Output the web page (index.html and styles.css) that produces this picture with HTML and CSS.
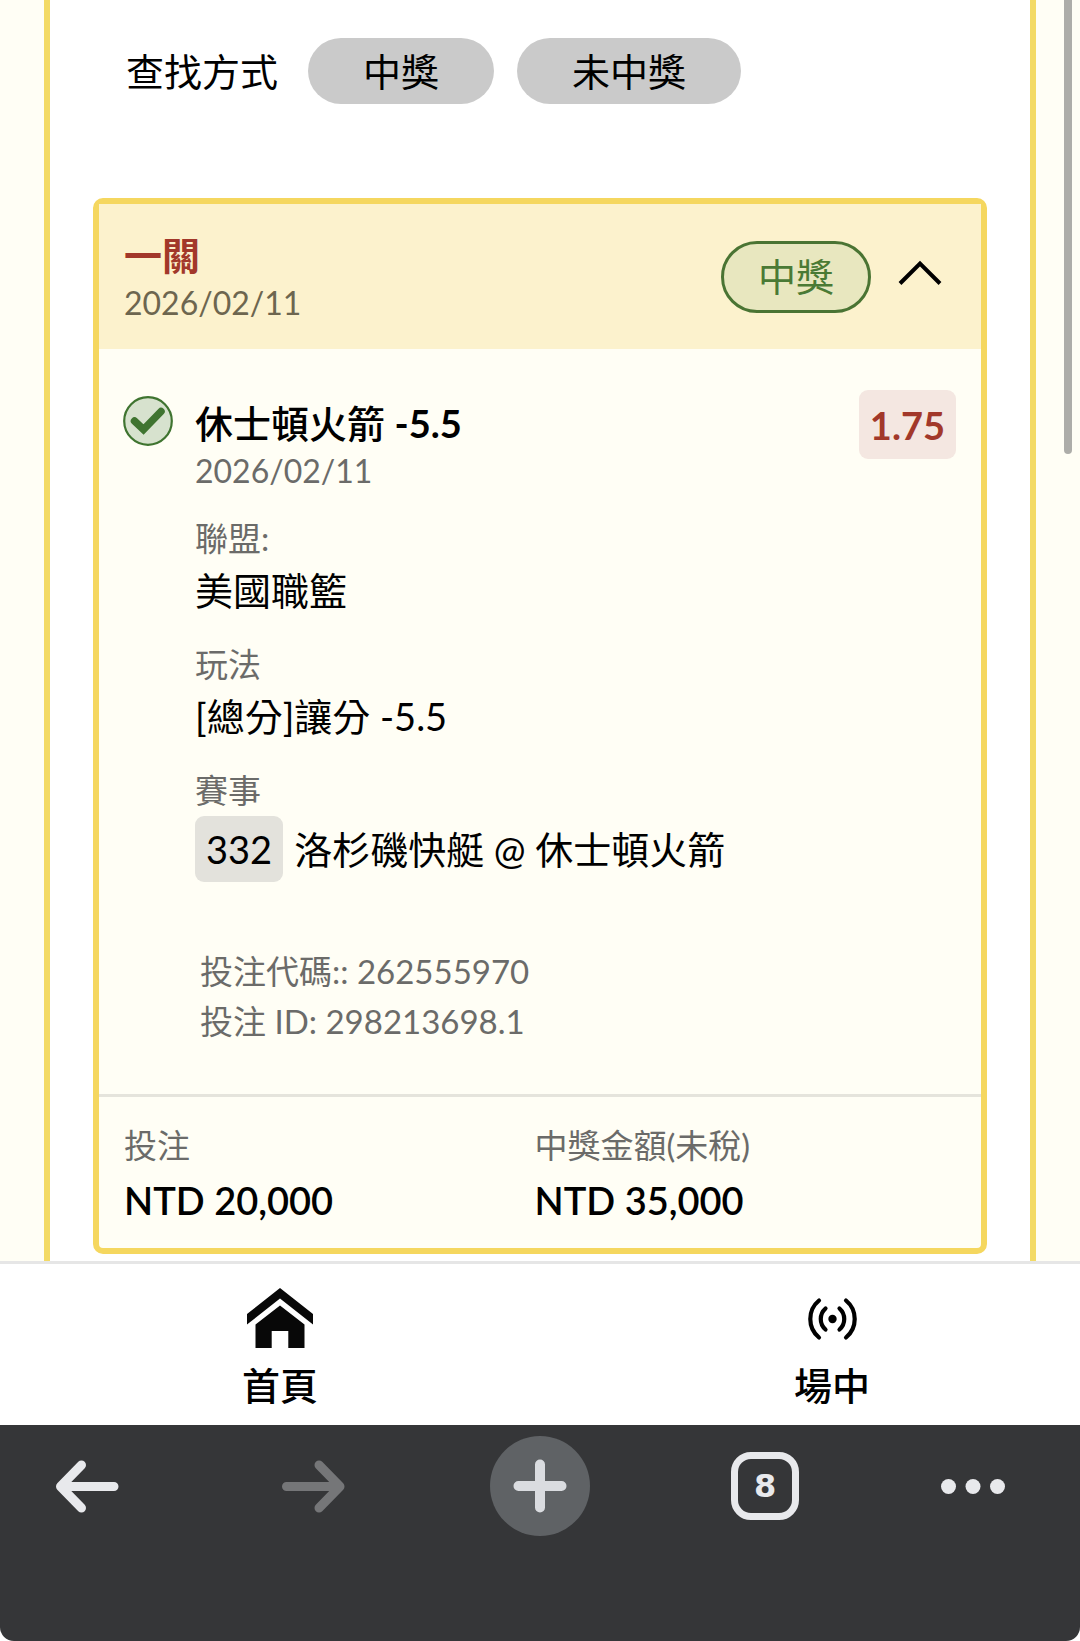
FILE: index.html
```html
<!DOCTYPE html>
<html lang="zh-Hant">
<head>
<meta charset="utf-8">
<meta name="viewport" content="width=device-width, initial-scale=1">
<title>投注紀錄</title>
<link rel="stylesheet" href="styles.css">
</head>
<body>
<div class="page">
  <div class="scrollbar" aria-hidden="true"></div>
  <main class="content">
    <section class="panel">
      <div class="filters" role="group" aria-labelledby="filter-label">
        <span class="filter-label" id="filter-label">查找方式</span>
        <button class="filter" type="button">中獎</button>
        <button class="filter" type="button">未中獎</button>
      </div>

      <article class="ticket">
        <header class="ticket-head">
          <div class="ticket-heading">
            <h2 class="ticket-title">一關</h2>
            <time class="muted date" datetime="2026-02-11">2026/02/11</time>
          </div>
          <span class="status">中獎</span>
          <button class="toggle" type="button" aria-label="收合" aria-expanded="true">
            <svg class="chevron" viewBox="0 0 44 26" aria-hidden="true"><path d="M2 23.500 22 3.500 42 23.500" fill="none" stroke="#000" stroke-width="4"/></svg>
          </button>
        </header>

        <div class="bet">
          <svg class="check" viewBox="0 0 50 50" aria-hidden="true">
            <circle cx="25" cy="25" r="23.800" fill="#d7e2ce" stroke="#3f7430" stroke-width="2.200"/>
            <path d="M11.500 25 20.500 33.500 38 15.500" fill="none" stroke="#3f7430" stroke-width="7.500" stroke-linecap="round"/>
          </svg>
          <div class="bet-body">
            <h3 class="bet-title">休士頓火箭 <span class="handicap">-5.5</span></h3>
            <time class="muted date" datetime="2026-02-11">2026/02/11</time>
            <dl class="details">
              <div class="detail">
                <dt class="muted">聯盟:</dt>
                <dd class="value">美國職籃</dd>
              </div>
              <div class="detail">
                <dt class="muted">玩法</dt>
                <dd class="value">[總分]讓分 -5.5</dd>
              </div>
              <div class="detail">
                <dt class="muted">賽事</dt>
                <dd class="value match"><span class="code">332</span><span>洛杉磯快艇 @ 休士頓火箭</span></dd>
              </div>
            </dl>
            <div class="ids">
              <p class="muted">投注代碼:: 262555970</p>
              <p class="muted">投注 ID: 298213698.1</p>
            </div>
          </div>
          <span class="odds">1.75</span>
        </div>

        <dl class="totals">
          <div>
            <dt class="muted">投注</dt>
            <dd class="amount">NTD 20,000</dd>
          </div>
          <div>
            <dt class="muted">中獎金額(未稅)</dt>
            <dd class="amount">NTD 35,000</dd>
          </div>
        </dl>
      </article>
    </section>
  </main>

  <nav class="tabs">
    <a class="tab" href="#home">
      <svg class="tab-icon" viewBox="0 0 72 72" aria-hidden="true">
        <path d="M36 5 69 31v10.500L36 15.500 3 41.500V31z" fill="#080808"/>
        <path d="M36 22.500 60.500 41.500V65H44.300V48H27.700V65H11.500V41.500z" fill="#080808"/>
      </svg>
      <span>首頁</span>
    </a>
    <a class="tab" href="#live">
      <svg class="tab-icon" viewBox="0 0 72 72" fill="none" stroke="#000" stroke-width="4.200" stroke-linecap="round" aria-hidden="true">
        <circle cx="36.500" cy="36" r="4.200" fill="#000" stroke="none"/>
        <path d="M29.500 25.500a14 14 0 0 0 0 21M43.500 25.500a14 14 0 0 1 0 21M23 17.500a24 24 0 0 0 0 37M50 17.500a24 24 0 0 1 0 37"/>
      </svg>
      <span>場中</span>
    </a>
  </nav>

  <footer class="browser">
    <button class="tool" type="button" aria-label="上一頁">
      <svg class="tool-icon" viewBox="0 0 100 100" aria-hidden="true"><path d="M43.500 29 22.500 50.500 43.500 72M24 50.500H76" fill="none" stroke="#e8e9ec" stroke-width="9" stroke-linecap="round" stroke-linejoin="round"/></svg>
    </button>
    <button class="tool" type="button" aria-label="下一頁" disabled>
      <svg class="tool-icon" viewBox="0 0 100 100" aria-hidden="true"><path d="M55 29 76 50.500 55 72M74.500 50.500H22.500" fill="none" stroke="#757678" stroke-width="9" stroke-linecap="round" stroke-linejoin="round"/></svg>
    </button>
    <button class="tool tool-new" type="button" aria-label="新分頁">
      <svg class="tool-icon" viewBox="0 0 100 100" aria-hidden="true"><path d="M50 28.500V71.500M28.500 50H71.500" fill="none" stroke="#dadce0" stroke-width="10" stroke-linecap="round"/></svg>
    </button>
    <button class="tool" type="button" aria-label="8 個分頁"><span class="tab-count">8</span></button>
    <button class="tool tool-menu" type="button" aria-label="選單">
      <svg class="menu-icon" viewBox="0 0 64 100" fill="#e8e9ec" aria-hidden="true"><circle cx="7.500" cy="50.500" r="7.500"/><circle cx="32" cy="50.500" r="7.500"/><circle cx="56.500" cy="50.500" r="7.500"/></svg>
    </button>
  </footer>
</div>
</body>
</html>
```
FILE: styles.css
```css
* {
  box-sizing: border-box;
}

body,
h2,
h3,
p,
dl,
dd {
  margin: 0;
}

body {
  background: #fff;
  color: #000;
  font-family: Lato, "Noto Sans CJK TC", sans-serif;
  font-size: 38px;
  line-height: 48px;
}

button {
  margin: 0;
  padding: 0;
  border: 0;
  background: none;
  color: inherit;
  font: inherit;
}

svg {
  display: block;
}

.page {
  position: relative;
  display: flex;
  flex-direction: column;
  min-height: 100vh;
  overflow: hidden;
}

.scrollbar {
  position: absolute;
  top: -8px;
  right: 8px;
  width: 8px;
  height: 462px;
  border-radius: 4px;
  background: #adada9;
}

.content {
  padding: 0 44px;
  background: #fffef5;
}

.panel {
  padding: 38px 43px 7px;
  border: solid #f3da65;
  border-width: 0 6px;
  background: #fff;
}

.filters {
  display: flex;
  align-items: center;
  gap: 23px;
  margin-bottom: 94px;
  padding-left: 33px;
}

.filter-label {
  margin-right: 7px;
}

.filter {
  height: 66px;
  padding: 0 55px;
  border-radius: 33px;
  background: #cacaca;
}

.ticket {
  border: 6px solid #f5d75f;
  border-radius: 10px;
  background: #fffef5;
}

.ticket-head {
  display: flex;
  align-items: center;
  padding: 27px 39px 22px 25px;
  background: #fcf2cd;
}

.ticket-heading {
  flex: 1;
}

.ticket-title {
  color: #a2382a;
  font-size: 38px;
  font-weight: 700;
}

.muted {
  display: block;
  color: #6b6b69;
  font-size: 33px;
}

.date {
  font-size: 32px;
}

.ticket-head .muted {
  color: #6d664f;
}

.status {
  margin-bottom: 4px;
  padding: 8px 34px 10px;
  border: 3px solid #4a7433;
  border-radius: 36px;
  background: #e8e7bf;
  color: #4a7a35;
}

.toggle {
  margin-left: 27px;
  padding-bottom: 12px;
}

.chevron {
  width: 44px;
  height: 26px;
}

.bet {
  display: flex;
  align-items: flex-start;
  padding: 41px 25px 48px 24px;
}

.check {
  flex: none;
  width: 50px;
  height: 50px;
  margin: 6px 22px 0 0;
}

.bet-body {
  flex: 1;
  padding-top: 9px;
}

.bet-title {
  font-size: 38px;
  font-weight: 500;
}

.handicap {
  font-weight: 700;
}

.odds {
  padding: 11px 11px 10px;
  border-radius: 9px;
  background: #f4e7e1;
  color: #a2382a;
  font-weight: 700;
}

.details {
  display: grid;
  gap: 22px;
  margin-top: 19px;
}

.value {
  line-height: 56px;
}

.match {
  display: flex;
  align-items: center;
  gap: 11px;
  padding-top: 2px;
  line-height: 66px;
}

.code {
  padding: 0 11px;
  border-radius: 9px;
  background: #e3e2dc;
}

.ids {
  margin-top: 64px;
  padding-left: 5px;
  line-height: 50px;
}

.totals {
  display: grid;
  grid-template-columns: 1fr 1fr;
  padding: 24px 36px 17px 25px;
  border-top: 3px solid #e5e4dc;
}

.amount {
  font-weight: 600;
  line-height: 62px;
}

.tabs {
  display: flex;
  padding: 19px 0 14px 4px;
  border-top: 3px solid #e6e6e6;
  background: #fff;
}

.tab {
  display: flex;
  flex: none;
  flex-direction: column;
  align-items: center;
  gap: 4px;
  width: calc(50% + 14px);
  color: #000;
  font-weight: 500;
  line-height: 52px;
  text-decoration: none;
}

.tab-icon {
  width: 72px;
  height: 72px;
}

.browser {
  display: flex;
  flex: 1;
  align-items: flex-start;
  justify-content: space-between;
  padding: 11px 75px 104px 38px;
  border-radius: 0 0 14px 14px;
  background: #353638;
}

.tool {
  display: flex;
  flex: none;
  align-items: center;
  justify-content: center;
  width: 100px;
  height: 100px;
}

.tool-icon {
  width: 100px;
  height: 100px;
}

.tool-new {
  border-radius: 50%;
  background: #5f6265;
}

.tool-menu {
  width: 64px;
}

.menu-icon {
  width: 64px;
  height: 100px;
}

.tab-count {
  width: 68px;
  height: 68px;
  border: 7px solid #e8e9ec;
  border-radius: 20px;
  color: #e8e9ec;
  font-family: "DejaVu Sans", sans-serif;
  font-size: 32px;
  font-weight: 700;
  line-height: 54px;
  text-align: center;
}
```
